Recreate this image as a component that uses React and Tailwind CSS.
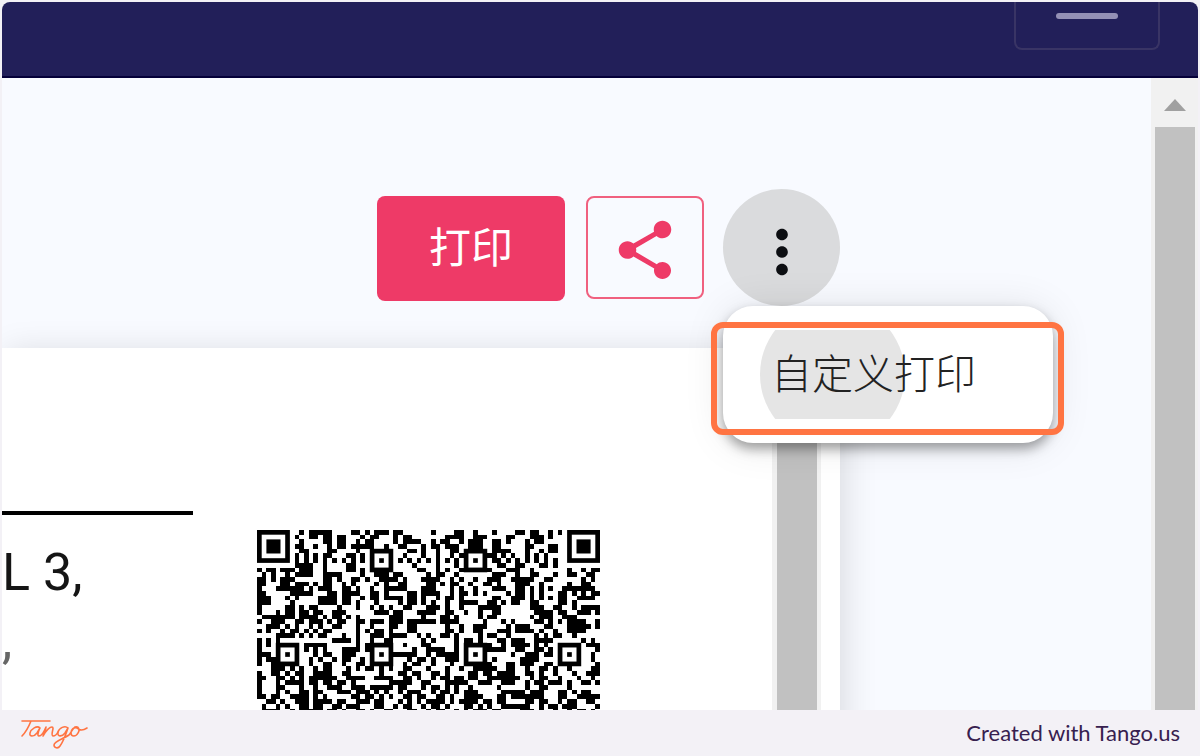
import React from "react";
import { MdShare, MdMoreVert } from "react-icons/md";

// Visible upper part of the 73 x 73 code, split at columns 24 and 48
const QR_ROWS = [
  ["########.#.#####....##.#", ".###.##......#....##..#.", "..#....##.##..#.#.#######"],
  ["#.....#.#..##.##.##...#.", "##...#.##.......####..##", "#....##...###.#...#.....#"],
  ["#.###.#..#....##.##..#.#", "#....#.####..#.##..#.###", "..##.#...#.##.....#.###.#"],
  ["#.###.#.##..#..#.##.####", "#..#..##...#.##.###..###", "..##.....##...##..#.###.#"],
  ["#.###.#..##....##....#..", "#####...##.#..#..##.####", "..####...#..#.##..#.###.#"],
  ["#.....#.#.#.#.##...##.#.", "#...#..#...#..#..#.##...", "###.#.#..#.#.#....#.....#"],
  ["#######.#.#.#.#.#.#.#.#.", "#.#.#.#.#.#.#.#.#.#.#.#.", "#.##.#.#.#.#.#.#..#######"],
  ["........####..#....##...", "#...#....#....#...#.#...", "...##..##...##.#........."],
  ["#.##.###.###..#....##.#.", "#####.....##..#.#..####.", "##...###..#.......#..#.##"],
  [".#.#..#.####..####....#.", ".###.##.....#.##..#.....", "..###..#..##...#..##..##."],
  ["##.#.###......##.#..##.#", "..####.#...####..#.#..#.", ".###..#####..##......#.#."],
  ["##...##.###.#.##..#.#...", ".#.#..##....##.#.##..#..", "##.#...###..#.....#..##.."],
  ["#...######.#.###..##.#..", "#..#####...###...#.#..#.", "..###..##.#.#.#..#######."],
  ["##.....#####...##.####..", "##.#....##.####..#.##.#.", "#....#.##.#.#...##.#.#.##"],
  ["###...#.#....####.##..#.", "##.####.##.#..#.##.#....", "..##..###.#.#.#.##..####."],
  ["###....#.....####.##.#..", ".#....#.##.#.#..#..####.", ".##.#.##..##....##.#....."],
  ["#.....##.#.##....#...#..", "#.#.#..##...###.#..#...#", "####......###..##..#.####"],
  ["#...#.##.##.##..###.....", ".###.##...####..##..#..#", "..##.......####.##..###.#"],
  [".#######.####.#.##.#.#..", "....###....#...##.#....#", ".##.......#.###..###....."],
  ["#..###..##.###.#.##..##.", "###.###.######.####.....", "#...#.#....##.#.#.####..#"],
  ["..###.#.#..#.#..##...#..", "#...##..##......#..#..##", "#....#.###...##...#####.#"],
  ["#.#..#.##.#.#.##.....#.#", ".##.#...##......##.#..##", "...###.####.#..#..####..."],
  ["....####.#.#.##...#..#..", "###.####..#.#..##.#....#", ".##..#.....#.#.##..#....."],
  ["#.#.#...........####.#..", "#..##......#.#....#.##.#", "...##.###..####......#.#."],
  ["#.#.#####.#####......#.#", "#####..#...##.....#.####", "##..#.####.#.#..#####.###"],
  ["#...#...#.#.#.#...####.#", "#...#....#..####..#.#...", "#####..##..##.#.#...#...#"],
  ["###.#.#.#...#.##..###...", "#.#.######..#.#####.#.#.", "......#..###.##.#.#.#..#."],
  ["#.###...#..#.#..#.##..#.", "#...#...#.##.#..###.#...", "#.#.....####....#...#..#."],
  ["#..######..#..##..#..##.", "#####..#.##..#...#..####", "##...##.###..##.#####...#"],
  ["...###.#.#..#.##...#.#.#", "#.#.#..##...#...#..#..##", "###..##..#..##.#..#....##"],
  ["#..##.#.##..####..##....", "..#...##.##..##.#....##.", "##.####..##.#..#...#..###"],
  ["##..##.#.#.######..####.", ".####..##.#..#.##.##.##.", ".#######..#.##..#...#..#."],
  ["#...#.####.##.##.##.#...", "....#####..##...#####..#", "##..###..#.##.###.#..##.#"],
  ["#...##...#..#..###..###.", "#####.##...#.##.#.#..#..", "...#.....#..##....#......"],
  ["#...#.#..##.##...###.###", ".#.#..#.###..#.##.#.###.", "....#####.###...##.#.##.."],
  ["##.##..####.#.#.....##.#", "#.#.#..##.##..##.#..####", "...##.#######...##..#####"],
  ["..##.#..###.####.##..###", ".##...#.#.#.####.#.####.", "##.##....##.##..#.##..##."],
  [".#..#.#..##.##..##.###..", ".##..#.##..#.##.#...##.#", ".#..######..#.##.###....#"],
  [".####..#.#####.##.#..##.", "#..##...##..#.##..#.#.##", "#.##....###.#..#..#.##.#."],
];

// Top left corners of the 5 x 5 alignment squares
const ALIGNMENT = [
  [24, 4],
  [44, 4],
  [4, 24],
  [24, 24],
  [44, 24],
  [64, 24],
];

const isFinder = (row, col) => row < 8 && (col < 8 || col > 64);
const isAlignment = (row, col) =>
  ALIGNMENT.some(([x, y]) => col >= x && col < x + 5 && row >= y && row < y + 5);

function QrCode() {
  let d = "";
  QR_ROWS.forEach((parts, row) => {
    parts.join("").split("").forEach((cell, col) => {
      if (cell === "#" && !isFinder(row, col) && !isAlignment(row, col)) {
        d += `M${col} ${row}h1v1h-1z`;
      }
    });
  });

  return (
    <svg viewBox="0 0 73 73" className="w-[343px] h-[343px]" aria-label="QR code">
      <path d={d} fill="#000" shapeRendering="crispEdges" />
      {[0, 66].map((x) => (
        <g key={x}>
          <rect x={x + 0.5} y="0.5" width="6" height="6" fill="none" stroke="#000" />
          <rect x={x + 2} y="2" width="3" height="3" />
        </g>
      ))}
      {ALIGNMENT.map(([x, y]) => (
        <g key={`${x}-${y}`}>
          <rect x={x + 0.5} y={y + 0.5} width="4" height="4" fill="none" stroke="#000" />
          <rect x={x + 2} y={y + 2} width="1" height="1" />
        </g>
      ))}
    </svg>
  );
}

function TangoLogo() {
  return (
    <svg
      viewBox="0 0 68 32"
      className="w-[68px] h-8"
      fill="none"
      stroke="#ff7442"
      strokeWidth="1.6"
      strokeLinecap="round"
      strokeLinejoin="round"
      aria-label="Tango"
    >
      <path d="M2 4H30M11 4C9 9 6 15 2 19" />
      <path d="M20 11C17 8 11 12 10 16C9 20 14 20 17 16L20 11C18 15 17 19 19 19C21 19 24 15 26 10C26 13 24 16 23 19C26 14 29 10 32 10C35 10 30 18 33 19C35 19 37 17 38 15" />
      <path d="M48 11C45 8 39 11 38 15C37 20 42 20 45 16L48 11C46 17 43 25 40 29C38 32 34 31 34 28C34 24 43 22 49 18C51 16 52 12 55 10C59 9 60 13 58 16C56 20 51 20 51 16C51 12 54 10 57 11C60 14 64 13 67 11" />
    </svg>
  );
}

export default function App() {
  return (
    <div className="flex flex-col h-screen overflow-hidden bg-[#f3f1f6] font-['Liberation_Sans',sans-serif]">
      <div className="flex flex-col flex-1 min-h-0 mx-[2px] mt-[2px] rounded-t-lg overflow-hidden bg-[#f8faff]">
        {/* Top bar */}
        <header className="flex justify-end shrink-0 h-[76px] pr-[38px] bg-[#221f59] border-b-2 border-[#050039]">
          <button
            type="button"
            aria-label="Menu"
            className="flex justify-center items-start w-[146px] h-12 pt-[11px] border-2 border-t-0 border-[#393465] rounded-b-lg"
          >
            <span className="w-[62px] h-[6px] rounded-full bg-[#9490b5]" />
          </button>
        </header>

        <div className="flex flex-1 min-h-0">
          <main className="flex flex-col flex-1 min-w-0">
            {/* Actions */}
            <div className="relative z-10 flex justify-end items-start shrink-0 h-[270px] pt-[111px] pr-[311px]">
              <button
                type="button"
                className="w-[188px] h-[105px] mt-[7px] mr-[21px] pb-2 rounded-lg bg-[#ee3a67] text-white text-[42px] leading-[48px] font-['Noto_Sans_CJK_SC',sans-serif]"
              >
                打印
              </button>
              <button
                type="button"
                aria-label="Share"
                className="flex justify-center items-center w-[118px] h-[103px] mt-[7px] mr-[19px] pt-1 rounded-lg border-2 border-[#f0607f] text-[#ee3a67]"
              >
                <MdShare size={70} />
              </button>
              <div className="relative">
                <button
                  type="button"
                  aria-label="More"
                  className="flex justify-center items-center w-[117px] h-[117px] pt-2 rounded-full bg-[#dadbdd] text-[#0c0e12]"
                >
                  <MdMoreVert size={70} />
                </button>

                {/* Dropdown */}
                <div className="absolute top-[117px] left-0 w-[330px] h-[137px] py-6 rounded-[30px] bg-white shadow-[0_6px_12px_rgba(0,0,0,0.35),0_2px_40px_rgba(0,0,0,0.1)]">
                  <button
                    type="button"
                    className="relative flex items-center w-full h-[89px] pl-12 pb-2 overflow-hidden text-[41px] leading-[48px] text-[#222] font-['Noto_Sans_CJK_SC',sans-serif] font-light"
                  >
                    <span className="absolute left-[37px] -top-7 w-[145px] h-[145px] rounded-full bg-[#e5e5e5]" />
                    <span className="relative">自定义打印</span>
                  </button>
                  <div className="absolute -left-3 top-4 w-[353px] h-[113px] rounded-xl border-[6px] border-[#ff7442] pointer-events-none" />
                </div>
              </div>
            </div>

            {/* Document preview */}
            <section className="flex flex-1 min-h-0 mr-[311px] -mb-12 bg-white shadow-[4px_4px_32px_rgba(0,0,0,0.13)]">
              <div className="flex flex-1 min-w-0 overflow-hidden">
                <div className="w-[191px] shrink-0 mt-[163px] border-t-4 border-black text-[52px] leading-[60px] text-[#151515] font-[Roboto,sans-serif]">
                  <p className="pt-7">L 3,</p>
                  <p className="pt-2 text-[#666]">,</p>
                </div>
                <div className="shrink-0 ml-16 mt-[182px]">
                  <QrCode />
                </div>
              </div>
              <div className="w-[49px] shrink-0 mr-[19px] pl-[5px] pr-1 bg-[#f1f1f1]">
                <div className="h-full bg-[#c1c1c1]" />
              </div>
            </section>
          </main>

          {/* Page scrollbar */}
          <div className="flex flex-col shrink-0 w-[47px] pl-1 pr-[3px] bg-[#f1f1f1]">
            <svg viewBox="0 0 22 12" className="w-[22px] h-3 mx-auto mt-[21px] mb-4 shrink-0">
              <path d="M11 0L22 12H0z" fill="#a0a0a0" />
            </svg>
            <div className="flex-1 bg-[#c1c1c1]" />
          </div>
        </div>
      </div>

      <footer className="flex justify-between items-center shrink-0 h-[46px] px-5">
        <TangoLogo />
        <p className="text-[22px] leading-6 text-[#37204f] font-[Lato,sans-serif]">
          Created with Tango.us
        </p>
      </footer>
    </div>
  );
}
